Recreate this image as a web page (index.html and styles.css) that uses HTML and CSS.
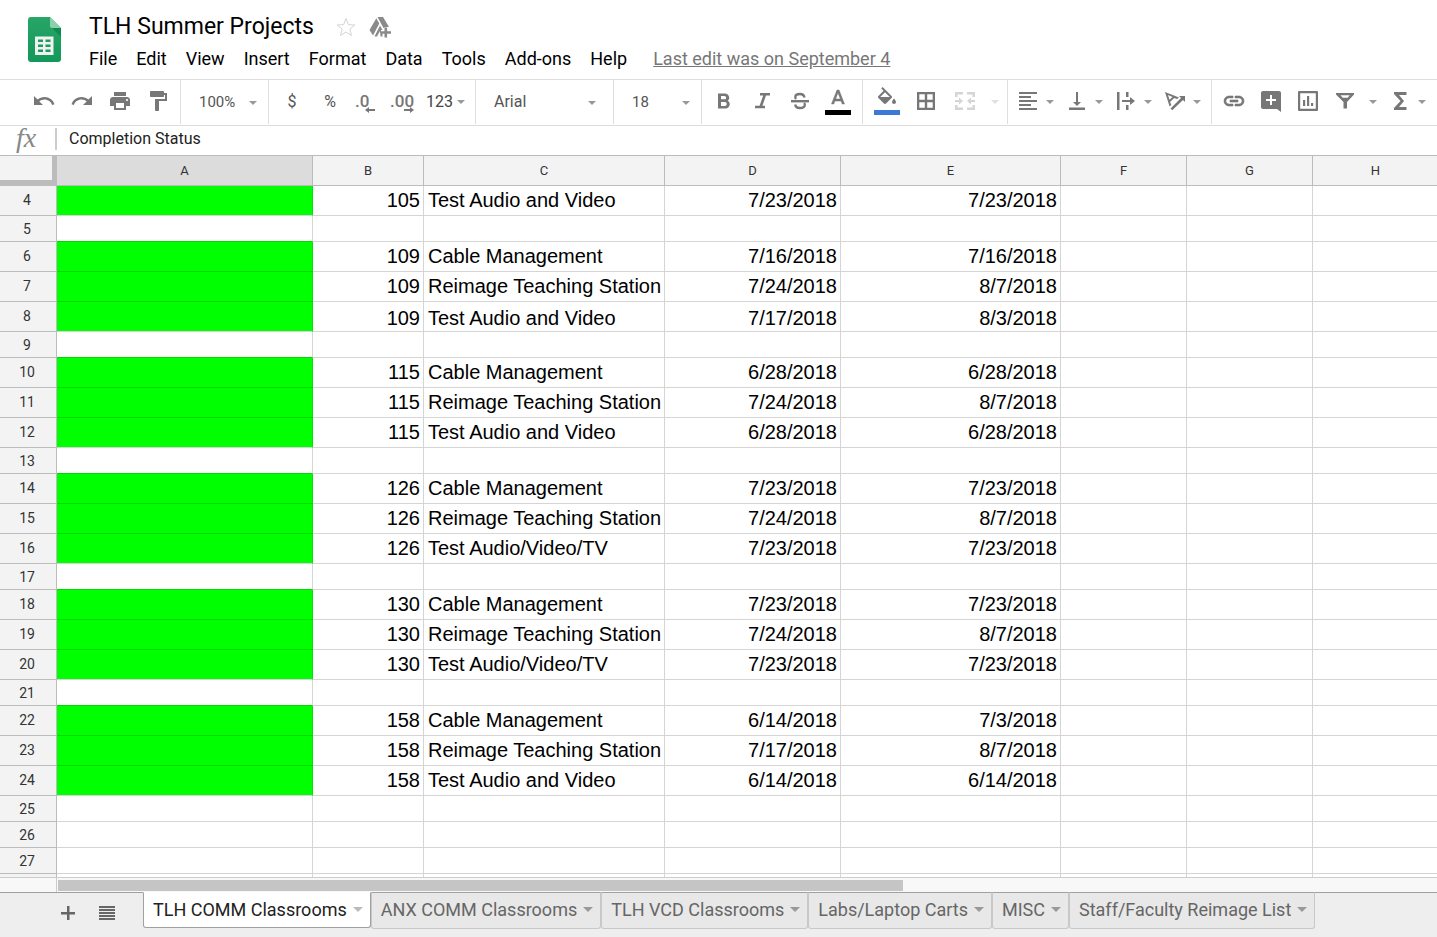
FILE: index.html
```html
<!DOCTYPE html>
<html lang="en">
<head>
<meta charset="utf-8">
<title>TLH Summer Projects</title>
<link rel="stylesheet" href="styles.css">
</head>
<body>
<header class="masthead">
  <svg class="logo" viewBox="0 0 34 46" aria-hidden="true">
    <defs><linearGradient id="sheet" x1="0" y1="0" x2="0" y2="1"><stop offset="0" stop-color="#28a567"/><stop offset="1" stop-color="#12995a"/></linearGradient></defs>
    <path fill="url(#sheet)" d="M3 0h19l11 11v31a3 3 0 0 1-3 3H3a3 3 0 0 1-3-3V3a3 3 0 0 1 3-3z"/>
    <path fill="#8dd0ae" d="M22 0l11 11H24a2 2 0 0 1-2-2z"/>
    <path fill="#0f8a50" d="M24 11h9v9z"/>
    <path fill="#f1f1f1" fill-rule="evenodd" d="M7 19.500h18.500V38H7zM10 22.500v2.500h5v-2.500zm7.500 0v2.500h5v-2.500zM10 27.500v2.500h5v-2.500zm7.500 0v2.500h5v-2.500zM10 32.500v2.500h5v-2.500zm7.500 0v2.500h5v-2.500z"/>
  </svg>
  <div class="heading">
    <div class="title-row">
      <h1>TLH Summer Projects</h1>
      <button class="title-btn star" aria-label="Star"><svg width="24" height="24" viewBox="0 0 24 24"><path d="M12 3.500l2.400 6.100 6.400.4-5 4.200 1.700 6.300L12 17l-5.500 3.500 1.700-6.300-5-4.200 6.400-.4z"/></svg></button>
      <button class="title-btn drive" aria-label="Add to My Drive"><svg width="24" height="24" viewBox="0 0 24 24"><path d="M9.500 2H15l6 10h-3.500L15.500 13zM8.300 3.300l3 5.200L5 20.500 1.500 15zM12 10.500l2.500 4.500H13v2h1.500v4.500h-2L12 16l-3 5.500H6.500z"/><path d="M16.500 12.500h2.600v3.700H23v2.600h-3.900v3.700h-2.600v-3.700h-3.700v-2.600h3.700z"/></svg></button>
    </div>
    <nav class="menu" aria-label="Menu">
      <button>File</button><button>Edit</button><button>View</button><button>Insert</button><button>Format</button><button>Data</button><button>Tools</button><button>Add-ons</button><button>Help</button>
      <a href="#history">Last edit was on September 4</a>
    </nav>
  </div>
</header>

<div class="toolbar" role="toolbar" aria-label="Formatting">
  <div class="group history">
    <button class="tool" aria-label="Undo"><svg viewBox="0 0 24 24"><path d="M12.500 8c-2.650 0-5.050.990-6.900 2.600L2 7v9h9l-3.620-3.620c1.390-1.160 3.160-1.880 5.120-1.880 3.540 0 6.550 2.310 7.600 5.500l2.370-.780C21.080 11.030 17.150 8 12.500 8z"/></svg></button>
    <button class="tool" aria-label="Redo"><svg viewBox="0 0 24 24"><path d="M18.400 10.600C16.550 8.990 14.150 8 11.500 8c-4.650 0-8.580 3.030-9.960 7.220L3.900 16c1.050-3.190 4.050-5.500 7.600-5.500 1.950 0 3.730.720 5.120 1.880L13 16h9V7l-3.600 3.600z"/></svg></button>
    <button class="tool" aria-label="Print"><svg viewBox="0 0 24 24"><path d="M19 8H5c-1.660 0-3 1.340-3 3v6h4v4h12v-4h4v-6c0-1.660-1.340-3-3-3zm-3 11H8v-5h8v5zm3-7c-.550 0-1-.450-1-1s.450-1 1-1 1 .450 1 1-.450 1-1 1zm-1-9H6v4h12V3z"/></svg></button>
    <button class="tool" aria-label="Paint format"><svg viewBox="0 0 24 24"><path d="M18 4V3c0-.550-.450-1-1-1H5c-.550 0-1 .450-1 1v4c0 .550.450 1 1 1h12c.550 0 1-.450 1-1V6h1v4H9v11c0 .550.450 1 1 1h2c.550 0 1-.450 1-1v-9h8V4h-3z"/></svg></button>
  </div>
  <div class="group pick zoom"><select aria-label="Zoom"><option>100%</option></select></div>
  <div class="group">
    <button class="tool symbol" aria-label="Currency">$</button>
    <button class="tool symbol" aria-label="Percent">%</button>
    <button class="tool decimals" aria-label="Decrease decimal places">.0<svg viewBox="0 0 10 6"><path d="M0 3l4-3v2h6v2H4v2z"/></svg></button>
    <button class="tool decimals" aria-label="Increase decimal places">.00<svg viewBox="0 0 10 6"><path d="M10 3L6 0v2H0v2h6v2z"/></svg></button>
    <button class="tool format">123<i class="caret"></i></button>
  </div>
  <div class="group pick font"><select aria-label="Font"><option>Arial</option></select></div>
  <div class="group pick size"><select aria-label="Font size"><option>18</option></select></div>
  <div class="group style">
    <button class="tool" aria-label="Bold"><svg viewBox="0 0 24 24"><path d="M15.600 11.790c.970-.670 1.650-1.770 1.650-2.790 0-2.500-1.850-4.500-4.500-4.500H6v15h7.540c2.340 0 4.210-2 4.210-4.250 0-1.600-.910-2.830-2.150-3.460zM9 7h3.500c.900 0 1.600.750 1.600 1.650s-.700 1.650-1.600 1.650H9zm4 9.900H9v-4h4c1 0 1.700.900 1.700 2s-.700 2-1.700 2z"/></svg></button>
    <button class="tool" aria-label="Italic"><svg viewBox="0 0 24 24"><path d="M10 4v2.500h3.200L9.600 16.800H5v2.500h10v-2.500h-2.600L16 6.500h4V4z"/></svg></button>
    <button class="tool" aria-label="Strikethrough"><svg viewBox="0 0 24 24"><path d="M3 11h18v2.400H3z"/><path d="M16.500 8.500C16 5.800 14.300 5 12 5S7.300 6 7.300 8c0 .8.300 1.400.8 2M7.200 15.500c.3 2.300 2.100 3.500 4.800 3.500 2.800 0 4.800-1.300 4.800-3.300 0-.8-.2-1.300-.6-1.800" fill="none" stroke="currentColor" stroke-width="2.300"/></svg></button>
    <button class="tool swatch" aria-label="Text color"><svg viewBox="0 0 24 24"><path d="M11 3L5.500 17h2.250l1.120-3h6.250l1.120 3h2.250L13 3h-2zm-1.380 9L12 5.670 14.380 12H9.620z" stroke="currentColor" stroke-width=".5"/></svg></button>
  </div>
  <div class="group cells">
    <button class="tool swatch fill" aria-label="Fill color"><svg viewBox="0 0 24 24"><path d="M16.560 8.940L7.620 0 6.210 1.410l2.380 2.380-5.150 5.150c-.590.590-.590 1.540 0 2.120l5.500 5.500c.290.290.680.440 1.060.440s.770-.150 1.060-.440l5.500-5.500c.590-.580.590-1.530 0-2.120zM5.210 10L10 5.210 14.790 10H5.210zM19 11.500s-2 2.170-2 3.500c0 1.100.900 2 2 2s2-.900 2-2c0-1.330-2-3.500-2-3.500z"/></svg></button>
    <button class="tool" aria-label="Borders"><svg viewBox="0 0 24 24"><path d="M3 3v18h18V3H3zm7.800 15.700H5.300v-5.500h5.500zm0-7.900H5.300V5.300h5.500zm7.900 7.900h-5.500v-5.500h5.500zm0-7.900h-5.500V5.300h5.500z"/></svg></button>
    <button class="tool" aria-label="Merge cells" disabled><svg viewBox="0 0 24 24"><path d="M2 3h8v2.500H4.500V8H2zM14 3h8v5h-2.500V5.500H14zM2 16h2.500v2.500H10V21H2zM19.500 16H22v5h-8v-2.500h5.500zM2 11h4V8.500l4 3.500-4 3.500V13H2zM22 11h-4V8.500L14 12l4 3.500V13h4z"/></svg></button>
    <button class="drop" aria-label="Merge options" disabled><i class="caret"></i></button>
  </div>
  <div class="group align">
    <button class="tool menu-tool" aria-label="Horizontal align"><svg viewBox="0 0 24 24"><path d="M15 15H3v2h12v-2zm0-8H3v2h12V7zM3 13h18v-2H3v2zm0 8h18v-2H3v2zM3 3v2h18V3H3z"/></svg><i class="caret"></i></button>
    <button class="tool menu-tool" aria-label="Vertical align"><svg viewBox="0 0 24 24"><path d="M16 13h-3V3h-2v10H8l4 4 4-4zM4 18.500V21h16v-2.500H4z"/></svg><i class="caret"></i></button>
    <button class="tool menu-tool" aria-label="Text wrapping"><svg viewBox="0 0 24 24"><path d="M3 3h2.500v18H3zM12 3h2.500v5H12zM12 16h2.500v5H12zM8 10.900h8V8l5 4-5 4v-2.900H8z"/></svg><i class="caret"></i></button>
    <button class="tool menu-tool" aria-label="Text rotation"><svg viewBox="0 0 24 24"><path fill-rule="evenodd" d="M2 3l14 5.500-1.800 1.600-3-1.200-4.100 4 1.200 3-1.700 1.700zM5 6l1.500 4.800L9.500 8z"/><path d="M7.500 19.500L18 9l-2-2h6v6l-2-2L9.200 21.200z"/></svg><i class="caret"></i></button>
  </div>
  <div class="group last">
    <button class="tool" aria-label="Insert link"><svg viewBox="0 0 24 24"><path d="M3.900 12c0-1.710 1.390-3.100 3.100-3.100h4V7H7c-2.760 0-5 2.240-5 5s2.240 5 5 5h4v-1.900H7c-1.710 0-3.100-1.390-3.100-3.100zM8 13h8v-2H8v2zm9-6h-4v1.900h4c1.710 0 3.100 1.390 3.100 3.100s-1.390 3.100-3.100 3.100h-4V17h4c2.760 0 5-2.240 5-5s-2.240-5-5-5z" stroke="currentColor" stroke-width=".6"/></svg></button>
    <button class="tool" aria-label="Insert comment"><svg viewBox="0 0 24 24"><path d="M22 4c0-1.100-.900-2-2-2H4c-1.100 0-2 .900-2 2v14c0 1.100.900 2 2 2h14l4 3zm-5 8h-4v4h-2v-4H7v-2h4V6h2v4h4v2z"/></svg></button>
    <button class="tool" aria-label="Insert chart"><svg viewBox="0 0 24 24"><path d="M7 11h2.200v6H7zM11 7h2.200v10H11zM15 14h2.200v3H15z"/><path d="M3 2a1 1 0 0 0-1 1v18a1 1 0 0 0 1 1h18a1 1 0 0 0 1-1V3a1 1 0 0 0-1-1zm1.200 2.200h15.600v15.600H4.200z" fill-rule="evenodd"/></svg></button>
    <button class="tool" aria-label="Filter"><svg viewBox="0 0 24 24"><path fill-rule="evenodd" d="M3 4h18v1.500L14 13v6.500h-3.500V13L3 5.500zM7.500 6.300l2.200 2.500h5l2.100-2.500z"/></svg></button>
    <button class="drop" aria-label="Filter views"><i class="caret"></i></button>
    <button class="tool sum" aria-label="Functions"><svg viewBox="0 0 24 24"><path d="M18.500 3H6v2l6.500 7L6 19v2h12.500v-3H11l5-6-5-6h7.500z"/></svg><i class="caret"></i></button>
  </div>
</div>

<div class="formula">
  <label for="fx">fx</label>
  <input id="fx" value="Completion Status">
</div>

<main class="grid">
<table>
<colgroup><col class="c-row"><col class="c-a"><col class="c-b"><col class="c-c"><col class="c-d"><col class="c-e"><col class="c-f"><col class="c-f"><col class="c-f"></colgroup>
<thead><tr><td class="corner"></td><th scope="col" class="current">A</th><th scope="col">B</th><th scope="col">C</th><th scope="col">D</th><th scope="col">E</th><th scope="col">F</th><th scope="col">G</th><th scope="col">H</th></tr></thead>
<tbody>
<tr class="task"><th scope="row">4</th><td class="status done"></td><td>105</td><td>Test Audio and Video</td><td>7/23/2018</td><td>7/23/2018</td><td></td><td></td><td></td></tr>
<tr><th scope="row">5</th><td class="status"></td><td></td><td></td><td></td><td></td><td></td><td></td><td></td></tr>
<tr class="task"><th scope="row">6</th><td class="status done"></td><td>109</td><td>Cable Management</td><td>7/16/2018</td><td>7/16/2018</td><td></td><td></td><td></td></tr>
<tr class="task"><th scope="row">7</th><td class="status done"></td><td>109</td><td>Reimage Teaching Station</td><td>7/24/2018</td><td>8/7/2018</td><td></td><td></td><td></td></tr>
<tr class="task bottom"><th scope="row">8</th><td class="status done"></td><td>109</td><td>Test Audio and Video</td><td>7/17/2018</td><td>8/3/2018</td><td></td><td></td><td></td></tr>
<tr><th scope="row">9</th><td class="status"></td><td></td><td></td><td></td><td></td><td></td><td></td><td></td></tr>
<tr class="task"><th scope="row">10</th><td class="status done"></td><td>115</td><td>Cable Management</td><td>6/28/2018</td><td>6/28/2018</td><td></td><td></td><td></td></tr>
<tr class="task"><th scope="row">11</th><td class="status done"></td><td>115</td><td>Reimage Teaching Station</td><td>7/24/2018</td><td>8/7/2018</td><td></td><td></td><td></td></tr>
<tr class="task"><th scope="row">12</th><td class="status done"></td><td>115</td><td>Test Audio and Video</td><td>6/28/2018</td><td>6/28/2018</td><td></td><td></td><td></td></tr>
<tr><th scope="row">13</th><td class="status"></td><td></td><td></td><td></td><td></td><td></td><td></td><td></td></tr>
<tr class="task"><th scope="row">14</th><td class="status done"></td><td>126</td><td>Cable Management</td><td>7/23/2018</td><td>7/23/2018</td><td></td><td></td><td></td></tr>
<tr class="task"><th scope="row">15</th><td class="status done"></td><td>126</td><td>Reimage Teaching Station</td><td>7/24/2018</td><td>8/7/2018</td><td></td><td></td><td></td></tr>
<tr class="task"><th scope="row">16</th><td class="status done"></td><td>126</td><td>Test Audio/Video/TV</td><td>7/23/2018</td><td>7/23/2018</td><td></td><td></td><td></td></tr>
<tr><th scope="row">17</th><td class="status"></td><td></td><td></td><td></td><td></td><td></td><td></td><td></td></tr>
<tr class="task"><th scope="row">18</th><td class="status done"></td><td>130</td><td>Cable Management</td><td>7/23/2018</td><td>7/23/2018</td><td></td><td></td><td></td></tr>
<tr class="task"><th scope="row">19</th><td class="status done"></td><td>130</td><td>Reimage Teaching Station</td><td>7/24/2018</td><td>8/7/2018</td><td></td><td></td><td></td></tr>
<tr class="task"><th scope="row">20</th><td class="status done"></td><td>130</td><td>Test Audio/Video/TV</td><td>7/23/2018</td><td>7/23/2018</td><td></td><td></td><td></td></tr>
<tr><th scope="row">21</th><td class="status"></td><td></td><td></td><td></td><td></td><td></td><td></td><td></td></tr>
<tr class="task"><th scope="row">22</th><td class="status done"></td><td>158</td><td>Cable Management</td><td>6/14/2018</td><td>7/3/2018</td><td></td><td></td><td></td></tr>
<tr class="task"><th scope="row">23</th><td class="status done"></td><td>158</td><td>Reimage Teaching Station</td><td>7/17/2018</td><td>8/7/2018</td><td></td><td></td><td></td></tr>
<tr class="task"><th scope="row">24</th><td class="status done"></td><td>158</td><td>Test Audio and Video</td><td>6/14/2018</td><td>6/14/2018</td><td></td><td></td><td></td></tr>
<tr><th scope="row">25</th><td class="status"></td><td></td><td></td><td></td><td></td><td></td><td></td><td></td></tr>
<tr><th scope="row">26</th><td class="status"></td><td></td><td></td><td></td><td></td><td></td><td></td><td></td></tr>
<tr><th scope="row">27</th><td class="status"></td><td></td><td></td><td></td><td></td><td></td><td></td><td></td></tr>
<tr><th scope="row"></th><td class="status"></td><td></td><td></td><td></td><td></td><td></td><td></td><td></td></tr>
</tbody>
</table>
</main>

<div class="scroll"><div class="track"><div class="thumb"></div></div></div>

<footer class="sheets">
  <button class="sheet-btn" aria-label="Add sheet"><svg width="14" height="14" viewBox="0 0 14 14"><path d="M6 0h2.500v6H14v2.500H8.500V14H6V8.500H0V6h6z"/></svg></button>
  <button class="sheet-btn" aria-label="All sheets"><svg width="16" height="14" viewBox="0 0 16 14"><path d="M0 0h16v2H0zM0 3h16v2H0zM0 6h16v2H0zM0 9h16v2H0zM0 12h16v2H0z"/></svg></button>
  <nav class="tabs" aria-label="Sheets">
    <button class="tab active">TLH COMM Classrooms<i class="caret"></i></button>
    <button class="tab">ANX COMM Classrooms<i class="caret"></i></button>
    <button class="tab">TLH VCD Classrooms<i class="caret"></i></button>
    <button class="tab">Labs/Laptop Carts<i class="caret"></i></button>
    <button class="tab">MISC<i class="caret"></i></button>
    <button class="tab">Staff/Faculty Reimage List<i class="caret"></i></button>
  </nav>
</footer>
</body>
</html>
```

FILE: styles.css
```css
* { box-sizing: border-box; }

body {
  margin: 0;
  height: 100vh;
  display: flex;
  flex-direction: column;
  overflow: hidden;
  background: #fff;
  color: #000;
  font-family: Roboto, sans-serif;
}

button, select, input {
  font: inherit;
  color: inherit;
  border: 0;
  padding: 0;
  margin: 0;
  background: none;
}

svg { display: block; fill: currentColor; }

.caret {
  flex: none;
  border: 4px solid transparent;
  border-top-color: #999;
  border-bottom: 0;
}

/* Title and menu */
.masthead {
  flex: none;
  display: flex;
  height: 80px;
  padding: 17px 28px 0;
  border-bottom: 1px solid #dedede;
}
.logo { width: 34px; height: 46px; margin-right: 27px; }
.heading { margin-top: -7px; }
.title-row { display: flex; align-items: center; height: 33px; }
h1 { margin: 0 20px 0 0; font-size: 23px; font-weight: 400; line-height: 32px; }
.title-btn { margin-right: 10px; }
.star svg { fill: none; stroke: #d4d4d4; }
.drive { color: #8a8a8a; }
.menu { display: flex; gap: 19px; margin-top: 4px; font-size: 18px; line-height: 24px; white-space: nowrap; }
.menu a { margin-left: 7px; color: #777; }

/* Toolbar */
.toolbar {
  flex: none;
  display: flex;
  height: 46px;
  border-bottom: 1px solid #dedede;
  color: #777;
  font-size: 15px;
}
.group {
  flex: none;
  display: flex;
  align-items: center;
  height: 44px;
  padding: 0 4px;
  border-right: 1px solid #dedede;
}
.group.history { padding: 0 3px 0 25px; }
.group.style { padding: 0 5px 0 3px; }
.group.cells { gap: 1px; padding: 0 2px 0 5px; }
.group.align { padding: 0 5px 0 2px; }
.group.last { padding-left: 3px; border-right: 0; }
.tool {
  display: flex;
  align-items: center;
  justify-content: center;
  width: 38px;
  height: 44px;
  padding-bottom: 2px;
}
.last .tool { width: 37px; }
.tool svg { flex: none; width: 24px; height: 24px; }
.tool:disabled, .drop:disabled { opacity: 0.3; }
.tool.symbol { color: #555; font-size: 16px; }
.tool.decimals { position: relative; font-size: 17px; font-weight: 500; justify-content: flex-start; padding-left: 6px; }
.tool.decimals svg { position: absolute; right: 12px; bottom: 11px; width: 10px; height: 6px; }
.tool.decimals + .decimals { padding-left: 3px; }
.tool.decimals + .decimals svg { right: 11px; }
.tool.format { width: 46px; gap: 4px; color: #444; font-size: 16px; padding-right: 5px; }
.drop { display: flex; align-items: center; justify-content: center; width: 19px; height: 44px; }
.cells .drop { width: 20px; }
.tool .caret { margin-top: 2px; }
.tool.menu-tool { width: 49px; gap: 6px; }
.last .tool.sum { width: 50px; gap: 6px; }

.pick { position: relative; padding: 0; color: #555; }
.pick select { appearance: none; width: 100%; height: 44px; padding-left: 18px; outline: 0; }
.pick::after {
  content: "";
  position: absolute;
  right: 11px;
  top: 21px;
  border: 4px solid transparent;
  border-top-color: #999;
  border-bottom: 0;
  pointer-events: none;
}
.zoom, .size { width: 88px; }
.font { width: 138px; font-size: 16px; }
.font::after { right: 17px; }
.font select { padding-bottom: 2px; }

.swatch { position: relative; }
.swatch::after {
  content: "";
  position: absolute;
  left: 6px;
  bottom: 9px;
  width: 26px;
  height: 5px;
  background: #000;
}
.swatch svg { margin-bottom: 4px; }
.fill::after { background: #3c78d8; }

/* Formula bar */
.formula { flex: none; display: flex; align-items: center; height: 29px; padding-bottom: 3px; }
.formula label {
  width: 57px;
  height: 22px;
  padding-left: 16px;
  border-right: 2px solid #ccc;
  color: #888;
  font: italic 28px/20px "Liberation Serif", serif;
}
.formula input { flex: 1; padding: 0 0 2px 12px; color: #222; font-size: 16px; outline: 0; }

/* Spreadsheet */
.grid { flex: 1; min-height: 0; overflow: hidden; border-top: 1px solid #bcbcbc; }
table { width: 1439px; table-layout: fixed; border-collapse: separate; border-spacing: 0; }
.c-row { width: 57px; }
.c-a { width: 256px; }
.c-b { width: 111px; }
.c-c { width: 241px; }
.c-d { width: 176px; }
.c-e { width: 220px; }
.c-f { width: 126px; }
tr { height: 26px; }
thead tr, .task { height: 30px; }
td, th { padding: 0; border-right: 1px solid #d5d5d5; border-bottom: 1px solid #d5d5d5; }
th { background: #f3f3f3; border-color: #bcbcbc; color: #333; font-size: 13px; font-weight: 400; line-height: 16px; }
tbody th { padding-right: 2px; font-size: 14px; }
.task th { padding-bottom: 2px; }
.current { background: #dcdcdc; }
.corner {
  background: #f3f3f3;
  border-color: #bcbcbc;
  box-shadow: inset -4px -5px #bcbcbc;
}
tbody td { padding: 0 4px 1px; font-family: "Liberation Sans", Arial, sans-serif; font-size: 20px; line-height: 24px; text-align: right; white-space: nowrap; }
tbody td:nth-child(n + 3) { padding-right: 3px; }
tbody td:nth-child(4) { text-align: left; }
.bottom td { vertical-align: bottom; }
.done { background: #0f0; border-right-color: #00e400; }
tr:has(+ tr .done) .status { border-bottom-color: #00d900; }

.scroll {
  flex: none;
  display: flex;
  height: 15px;
  padding-left: 56px;
  border-top: 1px solid #ccc;
  background: #f8f8f8;
}
.track { flex: 1; padding: 2px 0 1px 1px; border-left: 1px solid #ccc; }
.thumb { width: 61.3%; height: 100%; background: #c5c5c5; }

/* Sheet tabs */
.sheets {
  flex: none;
  display: flex;
  height: 45px;
  padding-left: 48px;
  border-top: 1px solid #a0a0a0;
  background: #eee;
  color: #666;
}
.sheet-btn { display: flex; align-items: center; justify-content: center; width: 39px; height: 39px; }
.tabs { display: flex; align-items: flex-start; margin: -1px 0 0 17px; }
.tab {
  display: flex;
  align-items: center;
  gap: 6px;
  height: 37px;
  padding: 0 7px 2px 9px;
  border: 1px solid #c8c8c8;
  border-top-color: #a0a0a0;
  border-radius: 0 0 3px 3px;
  background: #e8e8e8;
  font-size: 18px;
  white-space: nowrap;
}
.tab .caret { border-width: 5px 5px 0; }
.tab.active { height: 36px; border-color: #fff #a0a0a0 #a0a0a0; background: #fff; color: #222; }
.active .caret { border-top-color: #bbb; }
```
